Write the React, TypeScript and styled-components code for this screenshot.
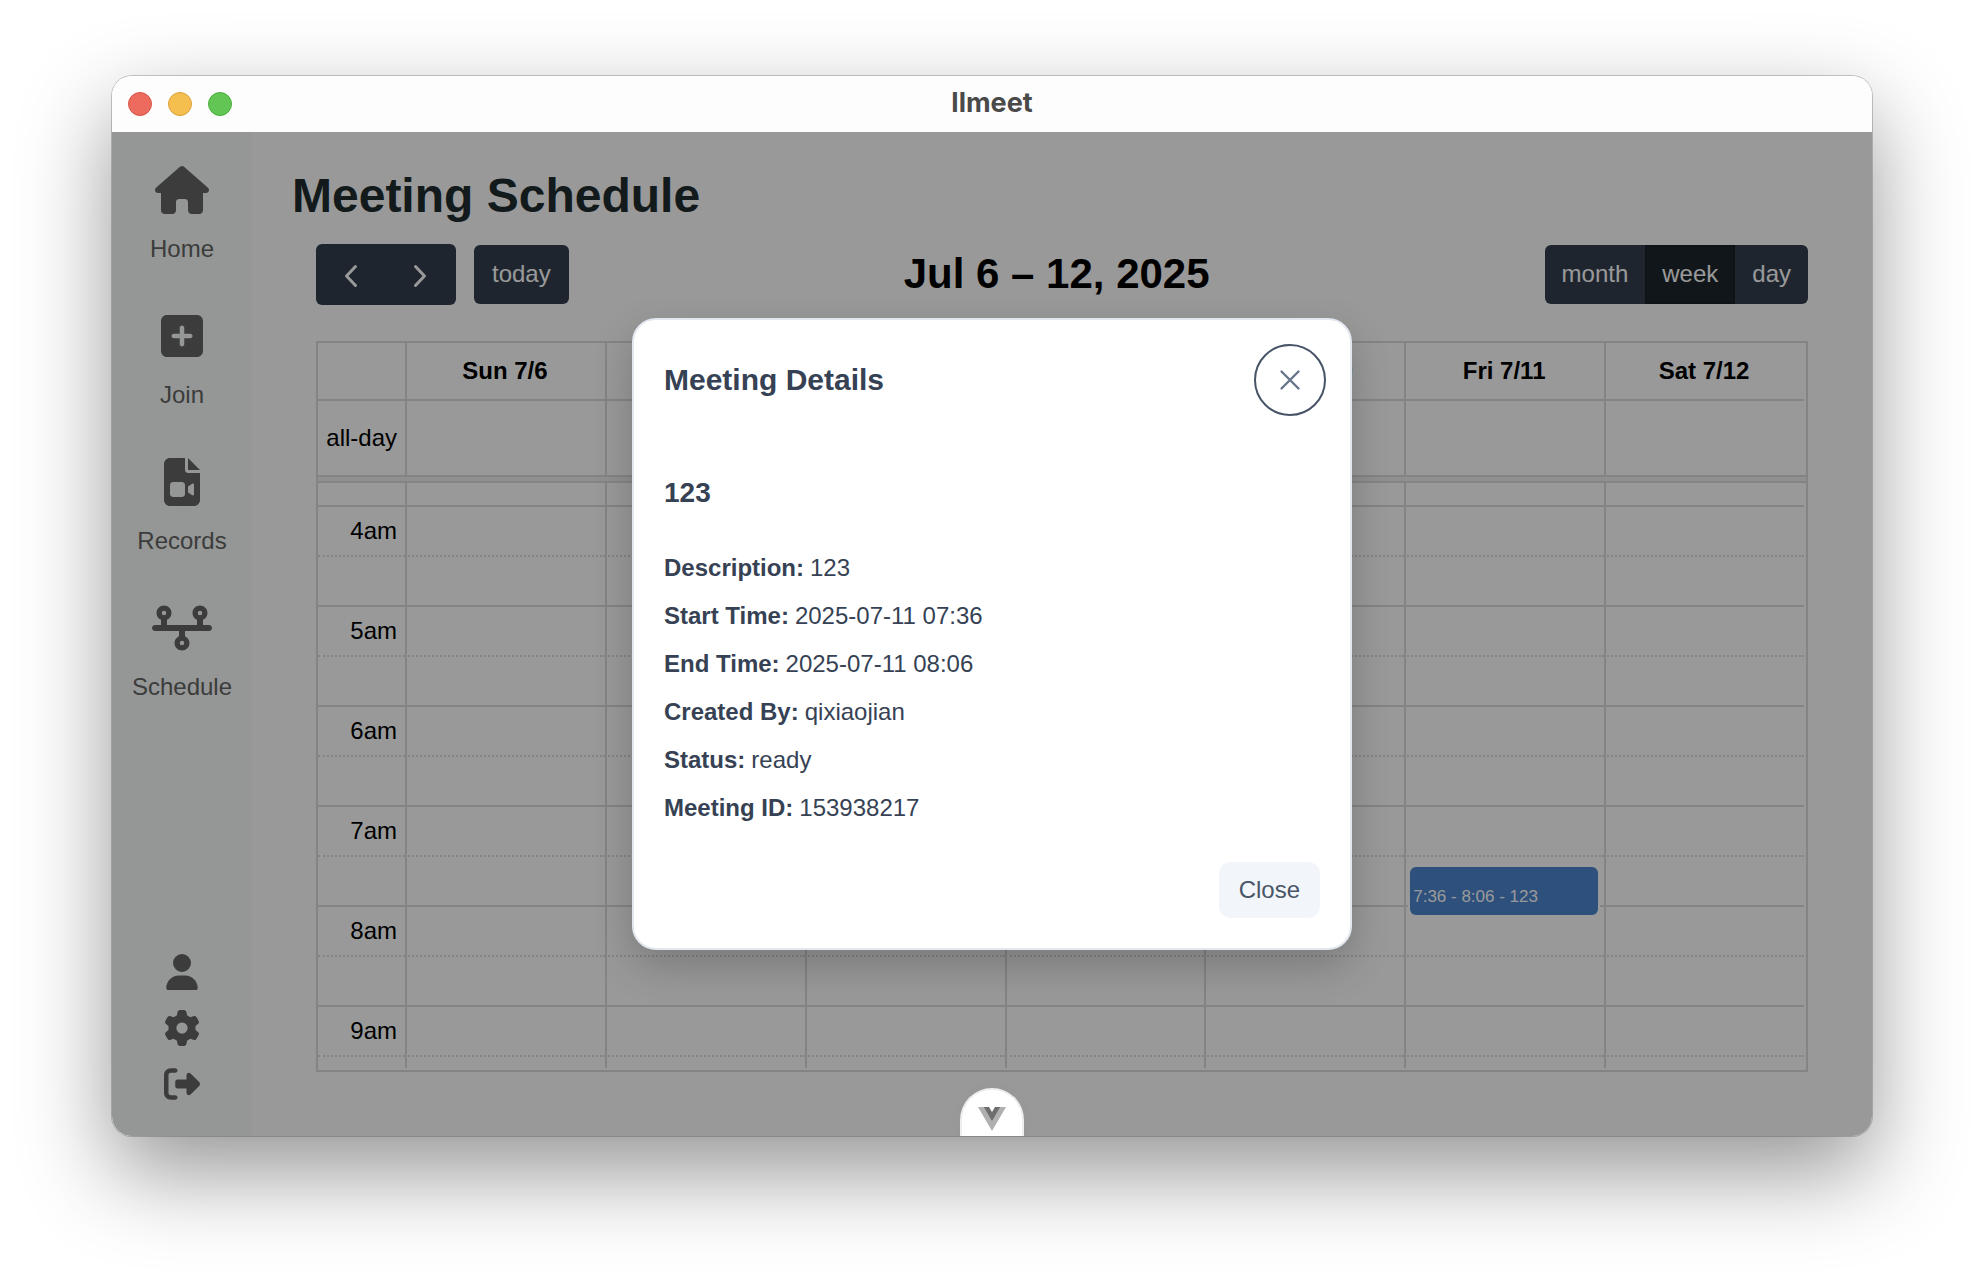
import React from "react";
import styled, { createGlobalStyle, css } from "styled-components";
import {
  FaHouse,
  FaSquarePlus,
  FaFileVideo,
  FaTimeline,
  FaUser,
  FaGear,
  FaRightFromBracket,
} from "react-icons/fa6";

const line = "#dddddd";
const sans = `"Liberation Sans", Arial, Helvetica, sans-serif`;

const GlobalStyle = createGlobalStyle`
  *, *::before, *::after { box-sizing: border-box; }
  html, body, #root { height: 100%; }
  body {
    margin: 0;
    background: #ffffff;
    font-family: ${sans};
    font-size: 24px;
    line-height: 28px;
  }
  button { font: inherit; color: inherit; border: 0; padding: 0; cursor: pointer; }
  h1, h2, h3, p, dl, dd { margin: 0; }
`;

const Desktop = styled.div`
  display: flex;
  height: 100vh;
  padding: 76px 112px 148px;
`;

const Window = styled.div`
  flex: 1;
  display: flex;
  flex-direction: column;
  min-width: 0;
  border-radius: 20px;
  overflow: hidden;
  box-shadow: 0 0 0 1px rgba(0, 0, 0, 0.2), 0 36px 90px rgba(0, 0, 0, 0.42);
`;

const TitleBar = styled.header`
  display: grid;
  grid-template-columns: 1fr auto 1fr;
  align-items: center;
  height: 56px;
  padding: 0 16px;
  background: #fdfdfd;
`;

const Lights = styled.div`
  display: flex;
  gap: 16px;
`;

const Light = styled.button<{ $fill: string; $edge: string }>`
  width: 24px;
  height: 24px;
  border-radius: 50%;
  background: ${(p) => p.$fill};
  border: 1px solid ${(p) => p.$edge};
`;

const WindowTitle = styled.div`
  padding-bottom: 2px;
  font: 700 27px/32px Inter, ${sans};
  color: #4a4a4a;
`;

const Body = styled.div`
  position: relative;
  flex: 1;
  display: flex;
  min-height: 0;
  background: #ffffff;
`;

const Sidebar = styled.nav`
  display: flex;
  flex-direction: column;
  justify-content: space-between;
  flex: 0 0 140px;
  padding: 34px 0;
  background: #f8fcfa;
  color: #646464;
`;

const NavList = styled.div`
  display: flex;
  flex-direction: column;
  gap: 46px;
`;

const NavItem = styled.a`
  display: flex;
  flex-direction: column;
  align-items: center;
  gap: 18px;
  line-height: 34px;
  color: inherit;
  text-decoration: none;
  svg { height: 48px; width: 60px; display: block; }
`;

const ToolList = styled.div`
  display: flex;
  flex-direction: column;
  align-items: center;
  gap: 20px;
`;

const ToolButton = styled.button`
  background: none;
  svg { height: 36px; width: 36px; display: block; }
`;

const Main = styled.main`
  flex: 1;
  display: flex;
  flex-direction: column;
  min-width: 0;
  padding: 32px 40px 64px;
`;

const PageTitle = styled.h1`
  font-size: 48px;
  line-height: 64px;
  color: #202c2e;
`;

const Calendar = styled.section`
  flex: 1;
  display: flex;
  flex-direction: column;
  min-height: 0;
  padding: 16px 24px 0;
`;

const Toolbar = styled.div`
  display: flex;
  justify-content: space-between;
  align-items: center;
  margin-bottom: 36px;
`;

const RangeTitle = styled.h2`
  padding-bottom: 2px;
  font-size: 42px;
  line-height: 48px;
  color: #000000;
`;

const ToolbarSide = styled.div`
  display: flex;
  align-items: center;
  gap: 18px;
`;

const Group = styled.div`
  display: flex;
  border-radius: 6px;
  overflow: hidden;
`;

const CalButton = styled.button<{ $active?: boolean; $icon?: boolean }>`
  display: flex;
  align-items: center;
  justify-content: center;
  height: ${(p) => (p.$icon ? 61 : 59)}px;
  width: ${(p) => (p.$icon ? "70px" : "auto")};
  padding: ${(p) => (p.$icon ? "0" : "0 17px 2px")};
  color: #ffffff;
  background: ${(p) => (p.$active ? "#1d252e" : "#323f4f")};
  ${(p) =>
    p.$active &&
    css`
      box-shadow: inset 0 0 0 2px #182029;
    `}
  svg { display: block; }
`;

const TodayButton = styled(CalButton)`
  padding: 0 18px 2px;
  border-radius: 6px;
`;

const Grid = styled.div`
  flex: 1;
  display: flex;
  flex-direction: column;
  min-height: 0;
  border: 2px solid ${line};
`;

const HeadTable = styled.table`
  table-layout: fixed;
  width: calc(100% - 2px);
  border-collapse: separate;
  border-spacing: 0;
  color: #000000;
  th, td {
    padding: 0 2px 0 0;
    border-left: 2px solid ${line};
  }
  th:first-child, td:first-child { width: 87px; border-left: 0; }
`;

const DayHead = styled.th`
  height: 56px;
  font-weight: 700;
  text-align: center;
`;

const AllDayCell = styled.td`
  height: 76px;
  border-top: 2px solid ${line};
`;

const AllDayLabel = styled(AllDayCell)`
  text-align: right;
  && { padding-right: 8px; }
`;

const Divider = styled.div`
  flex: none;
  height: 8px;
  border: solid ${line};
  border-width: 2px 0;
  background: #f0f0f0;
`;

const Scroller = styled.div`
  flex: 1;
  min-height: 0;
  overflow: hidden;
  padding: 0 2px 2px 0;
`;

const SlotClip = styled.div`
  height: 100%;
  overflow: hidden;
`;

const SlotTable = styled.table`
  table-layout: fixed;
  width: 100%;
  border-collapse: separate;
  border-spacing: 0;
  color: #000000;
  th, td {
    padding: 0;
    height: 50px;
    border-left: 2px solid ${line};
  }
  th {
    width: 87px;
    padding-right: 8px;
    border-left: 0;
    font-weight: 400;
    text-align: right;
  }
`;

const SlotRow = styled.tr<{ $kind: "partial" | "hour" | "half" }>`
  && > * {
    height: ${(p) => (p.$kind === "partial" ? 22 : 50)}px;
    border-top: ${(p) =>
      p.$kind === "partial"
        ? "0"
        : p.$kind === "hour"
        ? `2px solid ${line}`
        : `2px dotted ${line}`};
  }
`;

const EventCell = styled.td`
  position: relative;
`;

const EventCard = styled.button`
  position: absolute;
  z-index: 1;
  top: 10px;
  left: 4px;
  right: 6px;
  height: 48px;
  padding: 12px 3px 0;
  border-radius: 6px;
  background: #4b86d1;
  box-shadow: 0 0 0 2px #ffffff;
  color: #ffffff;
  font-size: 17px;
  line-height: 20px;
  text-align: left;
`;

const Overlay = styled.div`
  position: absolute;
  inset: 0;
  z-index: 2;
  display: flex;
  justify-content: center;
  align-items: center;
  background: rgba(0, 0, 0, 0.4);
`;

const Dialog = styled.section`
  width: 720px;
  display: flex;
  flex-direction: column;
  padding: 24px 30px 30px;
  border: 2px solid #e3e8f0;
  border-radius: 24px;
  background: #ffffff;
  color: #364254;
  box-shadow: 0 16px 40px rgba(0, 0, 0, 0.2);
`;

const DialogHead = styled.div`
  display: flex;
  justify-content: space-between;
  align-items: center;
  margin-right: -6px;
`;

const DialogTitle = styled.h2`
  font-size: 30px;
  line-height: 36px;
`;

const RoundClose = styled.button`
  display: flex;
  align-items: center;
  justify-content: center;
  width: 72px;
  height: 72px;
  border: 2px solid #475467;
  border-radius: 50%;
  background: #ffffff;
  color: #66758a;
`;

const MeetingName = styled.h3`
  margin: 60px 0 34px;
  font-size: 28px;
  line-height: 34px;
`;

const Details = styled.dl`
  display: flex;
  flex-direction: column;
`;

const Detail = styled.div`
  display: flex;
  gap: 6px;
  line-height: 48px;
  dt { font-weight: 700; }
`;

const DialogFoot = styled.div`
  display: flex;
  justify-content: flex-end;
  padding-top: 30px;
`;

const CloseButton = styled.button`
  height: 56px;
  padding: 0 20px;
  border-radius: 12px;
  background: #f2f5fa;
  color: #495568;
`;

const DevTab = styled.button`
  position: absolute;
  z-index: 3;
  bottom: 0;
  left: 50%;
  width: 64px;
  height: 48px;
  margin-left: -32px;
  padding-top: 12px;
  border: 2px solid #eeeeee;
  border-bottom: 0;
  border-radius: 32px 32px 0 0;
  background: #ffffff;
  box-shadow: 0 0 20px rgba(0, 0, 0, 0.02);
  svg { display: block; margin: 0 auto; }
`;

const Chevron = ({ dir }: { dir: "left" | "right" }) => (
  <svg width="36" height="36" viewBox="0 0 36 36" fill="none" stroke="currentColor" strokeWidth="3" strokeLinecap="round" strokeLinejoin="round">
    <path d={dir === "left" ? "M22.5 9.5 L13.5 19 L22.5 28.5" : "M12.5 9.5 L21.5 19 L12.5 28.5"} />
  </svg>
);

const nav = [
  { label: "Home", Icon: FaHouse },
  { label: "Join", Icon: FaSquarePlus },
  { label: "Records", Icon: FaFileVideo },
  { label: "Schedule", Icon: FaTimeline },
];

const tools = [
  { label: "Profile", Icon: FaUser },
  { label: "Settings", Icon: FaGear },
  { label: "Sign out", Icon: FaRightFromBracket },
];

const days = ["Sun 7/6", "Mon 7/7", "Tue 7/8", "Wed 7/9", "Thu 7/10", "Fri 7/11", "Sat 7/12"];
const hours = ["4am", "5am", "6am", "7am", "8am", "9am"];

const details = [
  ["Description:", "123"],
  ["Start Time:", "2025-07-11 07:36"],
  ["End Time:", "2025-07-11 08:06"],
  ["Created By:", "qixiaojian"],
  ["Status:", "ready"],
  ["Meeting ID:", "153938217"],
];

const HourRows = ({ hour }: { hour: string }) => (
  <>
    <SlotRow $kind="hour">
      <th scope="row">{hour}</th>
      {days.map((d) => (
        <td key={d} />
      ))}
    </SlotRow>
    <SlotRow $kind="half">
      <th />
      {days.map((d) =>
        hour === "7am" && d === "Fri 7/11" ? (
          <EventCell key={d}>
            <EventCard>7:36 - 8:06 - 123</EventCard>
          </EventCell>
        ) : (
          <td key={d} />
        )
      )}
    </SlotRow>
  </>
);

export default function App() {
  return (
    <>
      <GlobalStyle />
      <Desktop>
        <Window>
          <TitleBar>
            <Lights>
              <Light aria-label="Close window" $fill="#ed6a5e" $edge="#d65548" />
              <Light aria-label="Minimize" $fill="#f5bf4f" $edge="#d9a23b" />
              <Light aria-label="Zoom" $fill="#62c655" $edge="#4dab3f" />
            </Lights>
            <WindowTitle>llmeet</WindowTitle>
          </TitleBar>
          <Body>
            <Sidebar>
              <NavList>
                {nav.map(({ label, Icon }) => (
                  <NavItem key={label} href="#">
                    <Icon />
                    {label}
                  </NavItem>
                ))}
              </NavList>
              <ToolList>
                {tools.map(({ label, Icon }) => (
                  <ToolButton key={label} aria-label={label}>
                    <Icon />
                  </ToolButton>
                ))}
              </ToolList>
            </Sidebar>
            <Main>
              <PageTitle>Meeting Schedule</PageTitle>
              <Calendar>
                <Toolbar>
                  <ToolbarSide>
                    <Group>
                      <CalButton $icon aria-label="Previous week"><Chevron dir="left" /></CalButton>
                      <CalButton $icon aria-label="Next week"><Chevron dir="right" /></CalButton>
                    </Group>
                    <TodayButton>today</TodayButton>
                  </ToolbarSide>
                  <RangeTitle>Jul 6 – 12, 2025</RangeTitle>
                  <Group>
                    <CalButton>month</CalButton>
                    <CalButton $active>week</CalButton>
                    <CalButton>day</CalButton>
                  </Group>
                </Toolbar>
                <Grid>
                  <HeadTable>
                    <thead>
                      <tr>
                        <DayHead />
                        {days.map((d) => (
                          <DayHead key={d} scope="col">{d}</DayHead>
                        ))}
                      </tr>
                    </thead>
                    <tbody>
                      <tr>
                        <AllDayLabel>all-day</AllDayLabel>
                        {days.map((d) => (
                          <AllDayCell key={d} />
                        ))}
                      </tr>
                    </tbody>
                  </HeadTable>
                  <Divider />
                  <Scroller>
                    <SlotClip>
                      <SlotTable>
                        <tbody>
                          <SlotRow $kind="partial">
                            <th />
                            {days.map((d) => (
                              <td key={d} />
                            ))}
                          </SlotRow>
                          {hours.map((h) => (
                            <HourRows key={h} hour={h} />
                          ))}
                        </tbody>
                      </SlotTable>
                    </SlotClip>
                  </Scroller>
                </Grid>
              </Calendar>
            </Main>
            <Overlay>
              <Dialog role="dialog" aria-modal="true" aria-labelledby="meeting-details">
                <DialogHead>
                  <DialogTitle id="meeting-details">Meeting Details</DialogTitle>
                  <RoundClose aria-label="Close">
                    <svg width="24" height="24" viewBox="0 0 24 24" stroke="currentColor" strokeWidth="2.4" strokeLinecap="round">
                      <path d="M3.5 3.5 L20.5 20.5 M20.5 3.5 L3.5 20.5" />
                    </svg>
                  </RoundClose>
                </DialogHead>
                <MeetingName>123</MeetingName>
                <Details>
                  {details.map(([k, v]) => (
                    <Detail key={k}>
                      <dt>{k}</dt>
                      <dd>{v}</dd>
                    </Detail>
                  ))}
                </Details>
                <DialogFoot>
                  <CloseButton>Close</CloseButton>
                </DialogFoot>
              </Dialog>
            </Overlay>
            <DevTab aria-label="Toggle devtools">
              <svg width="28" height="24" viewBox="0 0 28 24">
                <path d="M0 0 H5.6 L14 14.5 L22.4 0 H28 L14 24 Z" fill="#b0b0b0" />
                <path d="M5.6 0 H11 L14 5 L17 0 H22.4 L14 14.5 Z" fill="#6e6e6e" />
              </svg>
            </DevTab>
          </Body>
        </Window>
      </Desktop>
    </>
  );
}
